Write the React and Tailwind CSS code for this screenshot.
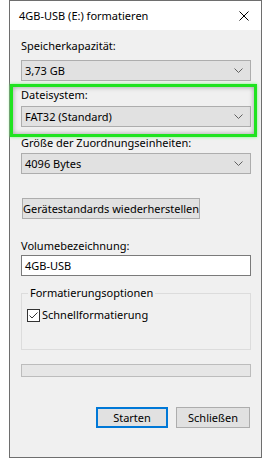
import React from "react";

const font = { fontFamily: '"Noto Sans", sans-serif' };

function Chevron() {
  return (
    <svg width="9" height="5" viewBox="0 0 9 5" className="block">
      <path d="M0.5 0.5 L4.5 4.5 L8.5 0.5" fill="none" stroke="#606060" strokeWidth="1" />
    </svg>
  );
}

function Combo({ value }) {
  return (
    <div className="h-[21px] w-[230px] border border-[#adadad] bg-[#e1e1e1] flex items-center justify-between pl-[3px] pr-[7px]">
      <span className="text-[11px] leading-[16px] text-black whitespace-nowrap">{value}</span>
      <Chevron />
    </div>
  );
}

export default function App() {
  return (
    <div className="w-[265px] h-[458px] bg-white" style={font}>
      <div className="ml-[9px] w-[253px] h-[458px] border border-[#6e6e6e] bg-[#f0f0f0] flex flex-col">
        <div className="h-[29px] shrink-0 bg-white flex items-center justify-between pl-[9px] pr-[12px]">
          <span className="text-[11px] leading-[16px] text-black whitespace-nowrap">4GB-USB (E:) formatieren</span>
          <svg width="10" height="10" viewBox="0 0 10 10">
            <path d="M0.5 0.5 L9.5 9.5 M9.5 0.5 L0.5 9.5" stroke="#000" strokeWidth="1" />
          </svg>
        </div>
        <div className="pl-[11px] flex flex-col text-[11px] leading-[16px] text-black whitespace-nowrap">
          <div className="mt-[8px] h-[16px]">Speicherkapazität:</div>
          <div className="mt-[6px]"><Combo value="3,73 GB" /></div>
          <div className="relative mt-[6px]">
            <div className="absolute left-[-11px] top-[-3px] w-[247px] h-[53px] border-[3px] border-[#1fe31f] shadow-[0_0_3px_#7cf57c,inset_0_0_5px_rgba(0,0,0,0.35)] pointer-events-none" />
            <div className="h-[16px]">Dateisystem:</div>
            <div className="mt-[3px]"><Combo value="FAT32 (Standard)" /></div>
          </div>
          <div className="mt-[8px] h-[16px]">Größe der Zuordnungseinheiten:</div>
          <div className="mt-[2px]"><Combo value="4096 Bytes" /></div>
          <div className="mt-[24px] w-[178px] h-[21px] ml-[1px] border border-[#adadad] bg-[#e1e1e1] flex items-center justify-center">
            Gerätestandards wiederherstellen
          </div>
          <div className="mt-[19px] h-[16px]">Volumebezeichnung:</div>
          <div className="mt-[1px] w-[230px] h-[21px] border border-[#7a7a7a] bg-white flex items-center pl-[3px]">
            4GB-USB
          </div>
          <div className="relative mt-[17px] w-[230px] h-[57px] border border-[#dcdcdc]">
            <div className="absolute left-[6px] top-[-9px] px-[2px] bg-[#f0f0f0] h-[16px]">Formatierungsoptionen</div>
            <div className="mt-[13px] ml-[5px] flex items-center gap-[2px]">
              <div className="w-[13px] h-[13px] border border-[#333] bg-white flex items-center justify-center">
                <svg width="11" height="11" viewBox="0 0 11 11">
                  <path d="M1.5 5.5 L4 8 L9.5 2.5" fill="none" stroke="#333" strokeWidth="1" />
                </svg>
              </div>
              <span>Schnellformatierung</span>
            </div>
          </div>
          <div className="mt-[14px] w-[230px] h-[13px] border border-[#bcbcbc] bg-[#e6e6e6]" />
          <div className="mt-[30px] flex justify-end pr-[11px] gap-[8px]">
            <div className="w-[72px] h-[21px] border-2 border-[#0078d7] bg-[#e1e1e1] flex items-center justify-center">Starten</div>
            <div className="w-[74px] h-[21px] border border-[#adadad] bg-[#e1e1e1] flex items-center justify-center">Schließen</div>
          </div>
        </div>
      </div>
    </div>
  );
}
